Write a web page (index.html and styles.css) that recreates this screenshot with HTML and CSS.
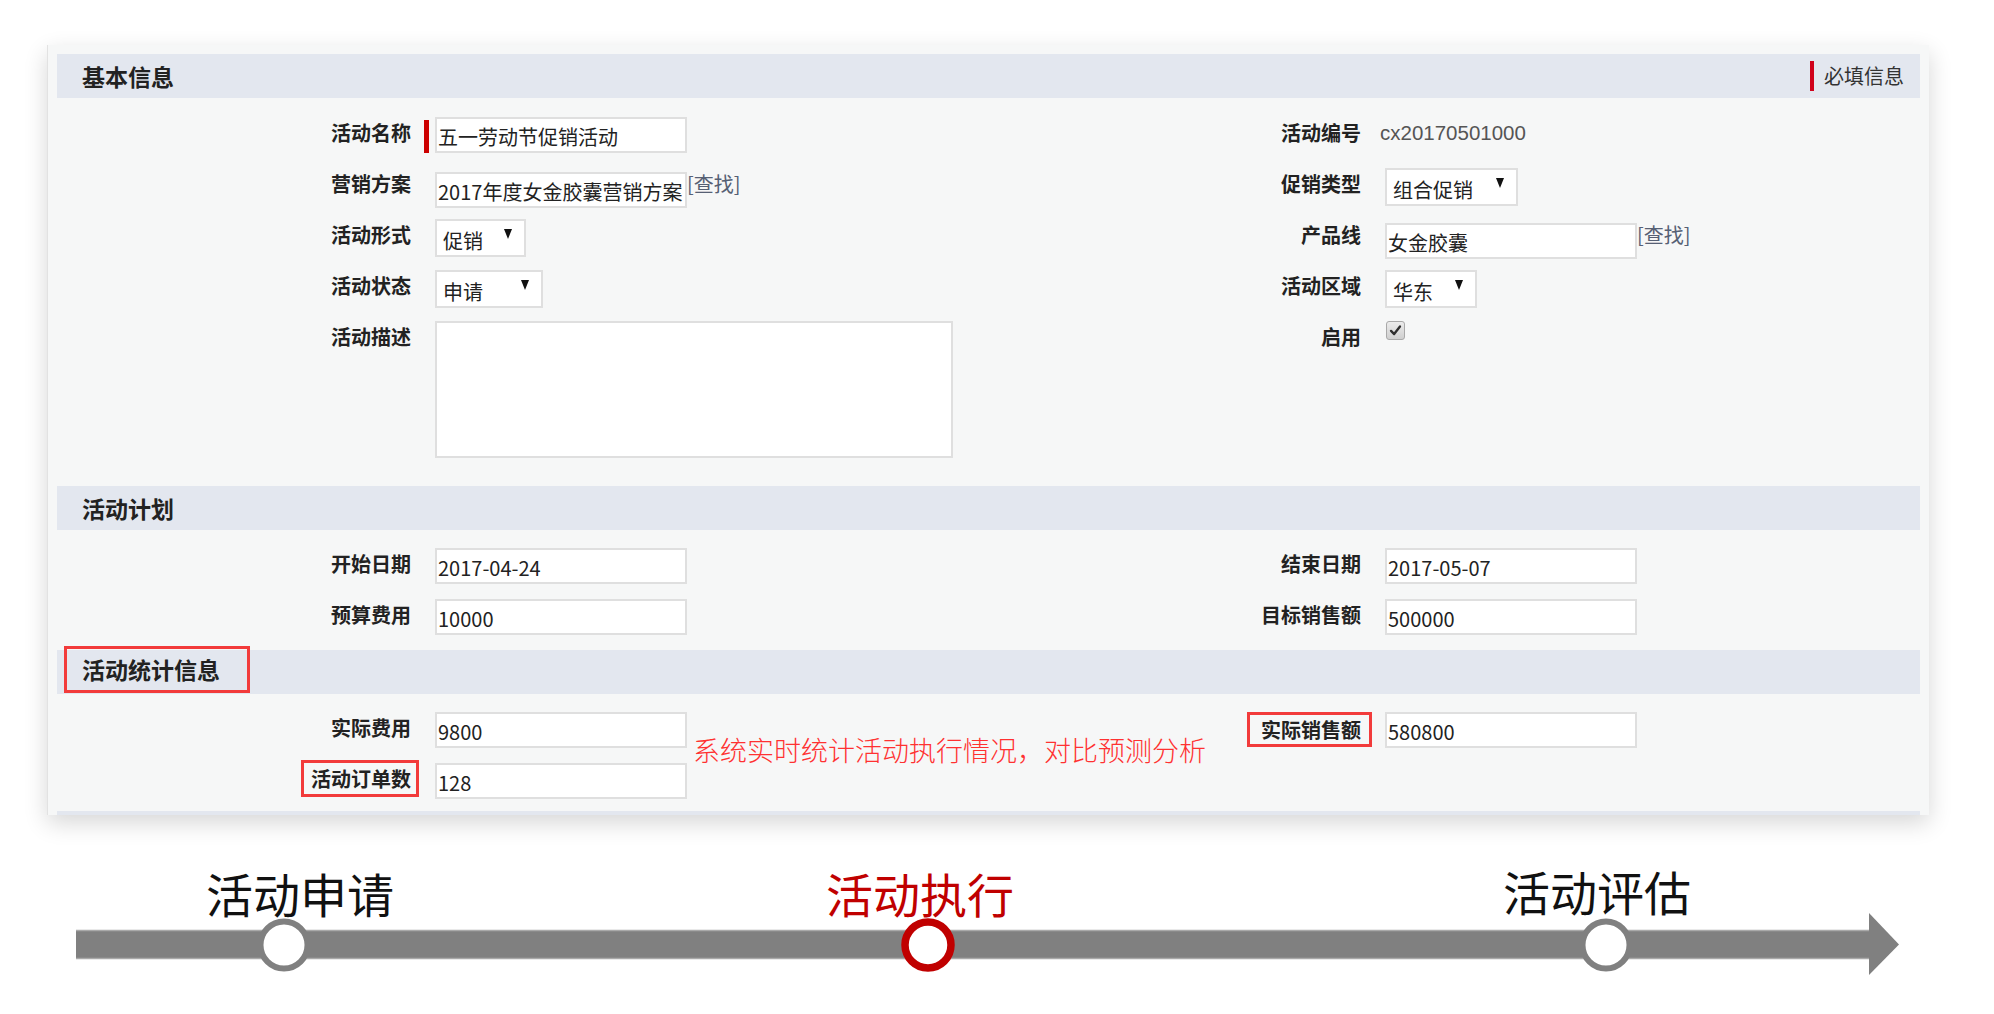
FILE: index.html
```html
<!DOCTYPE html>
<html lang="zh-CN">
<head>
<meta charset="utf-8">
<title>活动管理</title>
<link rel="stylesheet" href="styles.css">
</head>
<body>
<div class="panel">
  <section class="sec">
    <div class="sec-head">
      <span class="sec-title">基本信息</span>
      <span class="req">必填信息</span>
    </div>
    <div class="grid g1">
      <div class="lbl">活动名称</div>
      <div class="fld"><span class="mark"></span><input class="ipt" type="text" value="五一劳动节促销活动"></div>
      <div class="lbl">活动编号</div>
      <div class="fld"><span class="val">cx20170501000</span></div>

      <div class="lbl">营销方案</div>
      <div class="fld"><input class="ipt low" type="text" value="2017年度女金胶囊营销方案"><span class="find">[查找]</span></div>
      <div class="lbl">促销类型</div>
      <div class="fld"><div class="sel w133"><span>组合促销</span><i class="tri"></i></div></div>

      <div class="lbl">活动形式</div>
      <div class="fld"><div class="sel w91"><span>促销</span><i class="tri"></i></div></div>
      <div class="lbl">产品线</div>
      <div class="fld"><input class="ipt low" type="text" value="女金胶囊"><span class="find">[查找]</span></div>

      <div class="lbl">活动状态</div>
      <div class="fld"><div class="sel w108"><span>申请</span><i class="tri"></i></div></div>
      <div class="lbl">活动区域</div>
      <div class="fld"><div class="sel w92"><span>华东</span><i class="tri"></i></div></div>

      <div class="lbl">活动描述</div>
      <div class="fld"><textarea class="area"></textarea></div>
      <div class="lbl">启用</div>
      <div class="fld"><span class="chk"><svg viewBox="0 0 19 19" width="19" height="19"><path d="M4.5 10 L8 13.5 L14.5 5" fill="none" stroke="#2e2e2e" stroke-width="2.6" stroke-linecap="round" stroke-linejoin="round"/></svg></span></div>
    </div>
  </section>

  <section class="sec">
    <div class="sec-head"><span class="sec-title">活动计划</span></div>
    <div class="grid g2">
      <div class="lbl">开始日期</div>
      <div class="fld"><input class="ipt" type="text" value="2017-04-24"></div>
      <div class="lbl">结束日期</div>
      <div class="fld"><input class="ipt" type="text" value="2017-05-07"></div>

      <div class="lbl">预算费用</div>
      <div class="fld"><input class="ipt" type="text" value="10000"></div>
      <div class="lbl">目标销售额</div>
      <div class="fld"><input class="ipt" type="text" value="500000"></div>
    </div>
  </section>

  <section class="sec">
    <div class="sec-head"><span class="sec-title boxed-title">活动统计信息</span></div>
    <div class="grid g3">
      <div class="lbl r1 c1">实际费用</div>
      <div class="fld r1 c2"><input class="ipt" type="text" value="9800"></div>
      <div class="lbl r1 c3"><span class="boxed wide">实际销售额</span></div>
      <div class="fld r1 c4"><input class="ipt" type="text" value="580800"></div>

      <div class="lbl r2 c1"><span class="boxed">活动订单数</span></div>
      <div class="fld r2 c2"><input class="ipt" type="text" value="128"></div>

      <div class="note">系统实时统计活动执行情况，对比预测分析</div>
    </div>
  </section>
  <div class="panel-foot"></div>
</div>

<svg class="timeline" viewBox="0 0 1994 199" width="1994" height="199">
  <rect x="76" y="115" width="1796" height="29" fill="#808080"/>
  <line x1="76" y1="115.5" x2="1870" y2="115.5" stroke="#a9a9a9" stroke-width="1.5"/>
  <line x1="76" y1="143.5" x2="1870" y2="143.5" stroke="#a9a9a9" stroke-width="1.5"/>
  <polygon points="1869,98 1899,129.5 1869,160" fill="#808080"/>
  <circle cx="284" cy="130" r="23.5" fill="#fff" stroke="#808080" stroke-width="6"/>
  <circle cx="928" cy="130" r="23" fill="#fff" stroke="#c00000" stroke-width="7.5"/>
  <circle cx="1606" cy="130" r="23.5" fill="#fff" stroke="#808080" stroke-width="6"/>
  <text class="tl-text" x="300" y="98" text-anchor="middle">活动申请</text>
  <text class="tl-text tl-on" x="920" y="98" text-anchor="middle">活动执行</text>
  <text class="tl-text" x="1597" y="96" text-anchor="middle">活动评估</text>
</svg>
</body>
</html>
```

FILE: styles.css
```css
* { box-sizing: border-box; }

html, body {
  margin: 0;
  padding: 0;
  background: #ffffff;
}

body {
  width: 1994px;
  height: 1014px;
  overflow: hidden;
  font-family: "Noto Sans CJK SC", "Liberation Sans", sans-serif;
  color: #222;
}

.panel {
  margin: 45px 0 0 47px;
  width: 1882px;
  padding: 9px 9px 0 9px;
  background: #f6f7f7;
  border-left: 1px solid #e2e2e2;
  box-shadow: 0 8px 22px rgba(0, 0, 0, 0.16);
}

.sec-head {
  height: 44px;
  background: #e3e7ef;
  display: flex;
  align-items: center;
  padding-left: 25px;
  padding-right: 16px;
}

.sec-title {
  font-size: 23px;
  font-weight: 700;
  color: #222;
  line-height: 30px;
}

.req {
  margin-left: auto;
  font-size: 20px;
  color: #333;
  line-height: 30px;
  border-left: 4px solid #d0021b;
  padding-left: 10px;
}

.boxed-title {
  margin-left: -18px;
  padding: 0 27px 0 15px;
  height: 47px;
  line-height: 40px;
  border: 3px solid #f23b3b;
  align-self: flex-start;
  margin-top: -4px;
}

.grid {
  display: grid;
  grid-template-columns: 354px 750px 200px 1fr;
  padding-top: 19px;
}

.g1 {
  grid-template-rows: repeat(4, 51px) 137px;
  padding-bottom: 28px;
}

.g2 {
  grid-template-rows: 51px 51px;
  padding-top: 18px;
}

.g3 {
  grid-template-rows: 51px 48px;
  padding-top: 18px;
}

.r1 { grid-row: 1; }
.r2 { grid-row: 2; }
.c1 { grid-column: 1; }
.c2 { grid-column: 2; }
.c3 { grid-column: 3; }
.c4 { grid-column: 4; }

.lbl {
  text-align: right;
  font-size: 20px;
  font-weight: 700;
  color: #222;
  line-height: 32px;
  white-space: nowrap;
}

.fld {
  display: flex;
  align-items: flex-start;
  padding-left: 24px;
}

.mark {
  width: 5px;
  height: 33px;
  margin: 3px 6px 0 -11px;
  background: #cc0000;
}

.ipt {
  width: 252px;
  height: 36px;
  margin: 0;
  padding: 2px 1px 0 1px;
  border: 2px solid #dfdfdf;
  background: #fff;
  font-family: "Noto Sans CJK SC", "Liberation Sans", sans-serif;
  font-size: 20px;
  color: #222;
  outline: none;
}

.ipt.low { margin-top: 4px; }

.find {
  font-size: 20px;
  line-height: 32px;
  color: #566074;
}

.val {
  font-family: "Liberation Sans", "Noto Sans CJK SC", sans-serif;
  font-size: 20.5px;
  line-height: 32px;
  color: #555;
  margin-left: -5px;
}

.sel {
  height: 38px;
  border: 2px solid #dfdfdf;
  background: #fff;
  display: flex;
  align-items: center;
  padding: 4px 12px 0 6px;
  font-size: 20px;
  color: #222;
}

.w91 { width: 91px; }
.w92 { width: 92px; }
.w108 { width: 108px; }
.w133 { width: 133px; }

.tri {
  margin-left: auto;
  width: 0;
  height: 0;
  border-left: 4.5px solid transparent;
  border-right: 4.5px solid transparent;
  border-top: 10px solid #111;
  margin-bottom: 12px;
}

.area {
  width: 518px;
  height: 137px;
  margin: 0;
  border: 2px solid #dfdfdf;
  background: #fff;
  resize: none;
  outline: none;
}

.chk {
  width: 19px;
  height: 19px;
  margin-left: 1px;
  border: 1px solid #a9a9a9;
  border-radius: 3px;
  background: linear-gradient(#ececec, #cfcfcf);
  display: flex;
  align-items: center;
  justify-content: center;
  overflow: hidden;
}

.chk svg { display: block; }

.boxed {
  display: inline-block;
  border: 3px solid #f23b3b;
  padding: 0 5px 0 7px;
  margin-right: -8px;
  height: 37px;
  line-height: 31px;
}

.boxed.wide {
  padding: 0 8px 0 11px;
  margin-right: -11px;
}

.g3 .r1 .boxed { height: 35px; line-height: 29px; }
.g3 .r2 .boxed { margin-top: -4px; }

.note {
  grid-column: 2 / 4;
  grid-row: 1 / 3;
  align-self: start;
  margin-top: 22px;
  padding-left: 282px;
  font-size: 27px;
  font-weight: 300;
  line-height: 32px;
  color: #ff3131;
  white-space: nowrap;
}

.panel-foot {
  height: 4px;
  background: #e3e7ef;
}

.timeline {
  display: block;
}

.tl-text {
  font-family: "Noto Sans CJK SC", sans-serif;
  font-size: 47px;
  font-weight: 400;
  fill: #111;
}

.tl-on { fill: #c00000; }
```
